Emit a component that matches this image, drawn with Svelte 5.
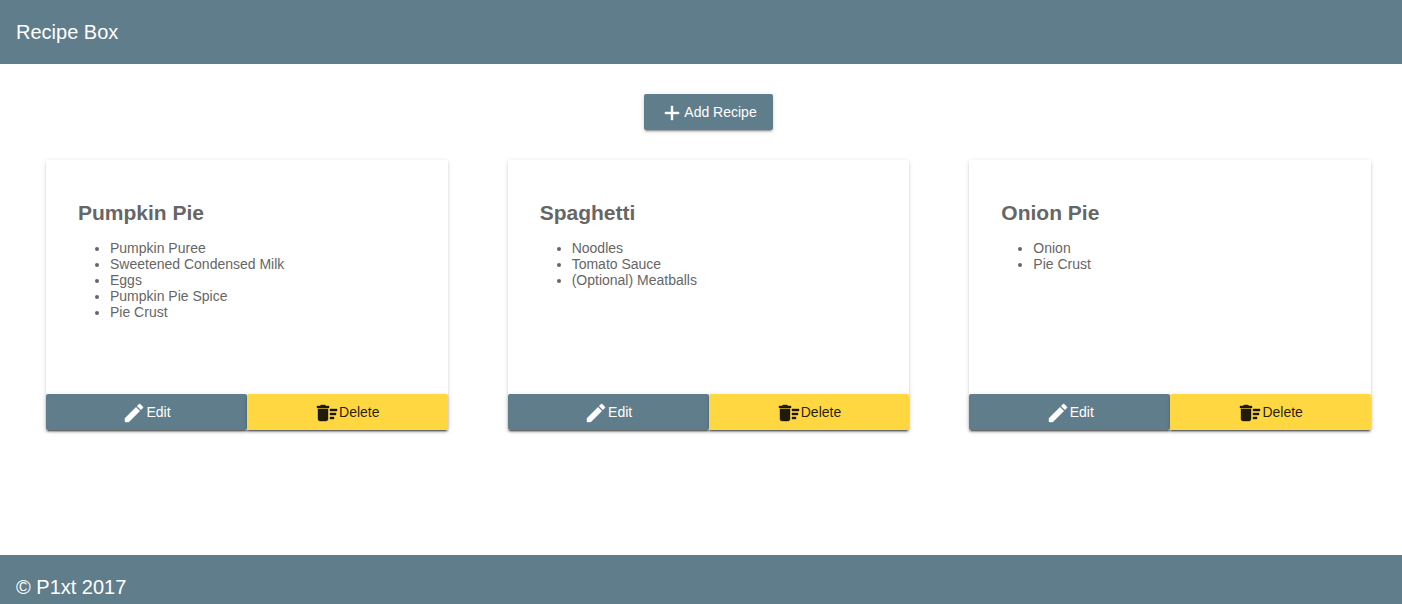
<script>
  const recipes = [
    { name: 'Pumpkin Pie', ingredients: ['Pumpkin Puree', 'Sweetened Condensed Milk', 'Eggs', 'Pumpkin Pie Spice', 'Pie Crust'] },
    { name: 'Spaghetti', ingredients: ['Noodles', 'Tomato Sauce', '(Optional) Meatballs'] },
    { name: 'Onion Pie', ingredients: ['Onion', 'Pie Crust'] }
  ];
</script>

<div class="page">
  <header class="toolbar">Recipe Box</header>
  <main>
    <div class="actions">
      <button class="btn primary add">
        <svg viewBox="0 0 24 24"><path d="M19 13h-6v6h-2v-6H5v-2h6V5h2v6h6v2z" /></svg>
        <span>Add Recipe</span>
      </button>
    </div>
    <div class="grid">
      {#each recipes as recipe}
        <article class="card">
          <div class="content">
            <h2>{recipe.name}</h2>
            <ul>
              {#each recipe.ingredients as item}
                <li>{item}</li>
              {/each}
            </ul>
          </div>
          <div class="buttons">
            <button class="btn primary">
              <svg viewBox="0 0 24 24"><path d="M3 17.25V21h3.75L17.81 9.94l-3.75-3.75L3 17.25zM20.71 7.04a1 1 0 0 0 0-1.41l-2.34-2.34a1 1 0 0 0-1.41 0l-1.83 1.83 3.75 3.75 1.83-1.83z" /></svg>
              <span>Edit</span>
            </button>
            <button class="btn accent">
              <svg viewBox="0 0 24 24"><path d="M15 16h4v2h-4zm0-8h7v2h-7zm0 4h6v2h-6zM3 18c0 1.100.9 2 2 2h6c1.100 0 2-.9 2-2V8H3v10zM14 5h-3l-1-1H6L5 5H2v2h12z" /></svg>
              <span>Delete</span>
            </button>
          </div>
        </article>
      {/each}
    </div>
  </main>
  <footer class="toolbar">© P1xt 2017</footer>
</div>

<style>
  :global(body) {
    background: #fff;
    overflow: hidden;
  }
  .page {
    height: 604px;
    overflow: hidden;
    display: flex;
    flex-direction: column;
    font-family: "Liberation Sans", Arial, sans-serif;
    font-size: 14px;
  }
  .toolbar {
    flex: none;
    display: flex;
    align-items: center;
    box-sizing: border-box;
    height: 64px;
    padding: 0 16px;
    background: #607d8b;
    color: #fff;
    font-size: 20px;
  }
  main {
    flex: none;
    box-sizing: border-box;
    height: 491px;
    padding: 30px 31px 0 46px;
  }
  .actions {
    display: flex;
    justify-content: center;
  }
  .btn {
    display: flex;
    align-items: center;
    justify-content: center;
    height: 36px;
    margin: 0;
    padding: 0 16px;
    border: 0;
    border-radius: 2px;
    font: inherit;
    line-height: 36px;
    box-shadow: 0 3px 1px -2px rgba(0, 0, 0, 0.2), 0 2px 2px 0 rgba(0, 0, 0, 0.14), 0 1px 5px 0 rgba(0, 0, 0, 0.12);
  }
  .btn svg {
    width: 24px;
    height: 24px;
    margin-top: 2px;
    fill: currentColor;
    stroke: currentColor;
    stroke-width: 0.4;
    stroke-linejoin: round;
  }
  .primary {
    background: #607d8b;
    color: #fff;
  }
  .accent {
    background: #ffd740;
    color: rgba(0, 0, 0, 0.87);
  }
  .grid {
    display: grid;
    grid-template-columns: repeat(3, 1fr);
    gap: 60px;
    margin-top: 30px;
  }
  .card {
    display: flex;
    flex-direction: column;
    height: 270px;
    border-radius: 2px;
    color: #666;
    box-shadow: 0 3px 1px -2px rgba(0, 0, 0, 0.2), 0 2px 2px 0 rgba(0, 0, 0, 0.14), 0 1px 5px 0 rgba(0, 0, 0, 0.12);
  }
  .content {
    flex: 1;
    padding: 41px 32px 0;
  }
  h2 {
    margin: 0;
    font-size: 21px;
    line-height: 24px;
  }
  ul {
    margin: 15px 0 0;
    padding: 0 0 0 32px;
    line-height: 16px;
  }
  .buttons {
    display: grid;
    grid-template-columns: 50.03% 1fr;
  }
</style>
